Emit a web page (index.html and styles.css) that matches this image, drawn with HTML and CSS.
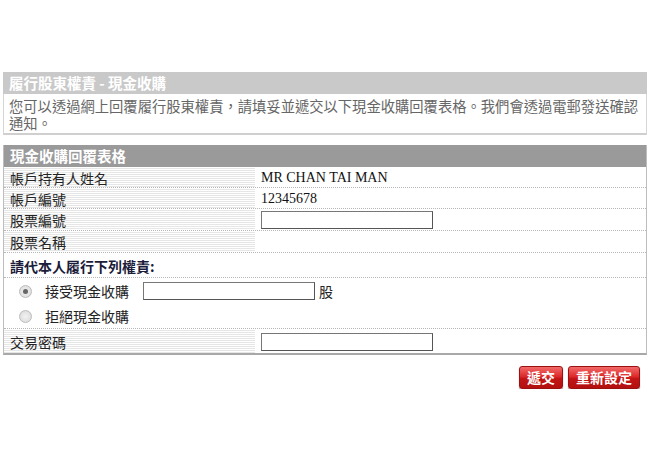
FILE: index.html
```html
<!DOCTYPE html>
<html lang="zh-Hant">
<head>
<meta charset="utf-8">
<link rel="stylesheet" href="styles.css">
</head>
<body>
<div class="page">
  <div class="sec">
    <div class="head head-light">履行股東權責 - 現金收購</div>
    <div class="desc">您可以透過網上回覆履行股東權責，請填妥並遞交以下現金收購回覆表格。我們會透過電郵發送確認通知。</div>
  </div>
  <div class="sec form">
    <div class="head head-dark">現金收購回覆表格</div>
    <div class="row"><div class="lbl">帳戶持有人姓名</div><div class="val serif">MR CHAN TAI MAN</div></div>
    <div class="row"><div class="lbl">帳戶編號</div><div class="val serif">12345678</div></div>
    <div class="row tall"><div class="lbl">股票編號</div><div class="val"><span class="input"></span></div></div>
    <div class="row tall"><div class="lbl">股票名稱</div><div class="val"></div></div>
    <div class="row full bold">請代本人履行下列權責:</div>
    <div class="opt"><span class="radio on"></span><span class="otext">接受現金收購</span><span class="input"></span><span class="unit">股</span></div>
    <div class="opt last"><span class="radio"></span><span class="otext">拒絕現金收購</span></div>
    <div class="row end"><div class="lbl">交易密碼</div><div class="val"><span class="input"></span></div></div>
  </div>
  <div class="btns">
    <span class="btn">遞交</span>
    <span class="btn">重新設定</span>
  </div>
</div>
</body>
</html>
```
FILE: styles.css
```css
html, body { margin: 0; padding: 0; background: #fff; }
body { font-family: "Noto Sans CJK TC", "Noto Sans", sans-serif; font-size: 13px; color: #222; }
.page { padding: 72px 3px 0 3px; width: 644px; }
.sec { display: flex; flex-direction: column; }
.head { height: 22px; line-height: 22px; color: #fff; font-weight: bold; padding-left: 6px; font-size: 14.5px; }
.head-light { background: #c9c9c9; }
.head-dark { background: #9a9a9a; }
.desc { border: 1px solid #d6d6d6; border-top: none; border-bottom: 2px solid #cfcfcf; color: #666; font-size: 14.3px; line-height: 17px; padding: 3px 0 2px 5px; height: 34px; }
.form { margin-top: 10px; border: 1px solid #bdbdbd; border-top: none; border-bottom: 2px solid #a8a8a8; }
.row { display: flex; height: 20px; border-bottom: 1px dotted #b8b8b8; }
.row.tall { height: 21px; }
.lbl { width: 245px; padding-left: 6px; padding-top: 2px; line-height: 18px; font-size: 14px; color: #222;
  background: repeating-linear-gradient(to bottom, #fff 0, #fff 1px, #e6e6e6 1px, #e6e6e6 2px); }
.row.tall .lbl { line-height: 19px; }
.val { padding-left: 6px; padding-top: 1px; display: flex; align-items: center; flex: 1; }
.serif { font-family: "Liberation Serif", "Times New Roman", serif; font-size: 14px; color: #111; }
.input { display: inline-block; width: 170px; height: 16px; border: 1px solid #777; border-right-color: #555; border-bottom-color: #555; background: #fff; }
.full { padding-left: 6px; padding-top: 2px; line-height: 22px; height: 22px; }
.bold { font-weight: bold; color: #1b1b3a; font-size: 14px; }
.opt { display: flex; align-items: center; height: 24px; padding-left: 15px; padding-top: 1px; font-size: 14px; }
.opt.last { border-bottom: 1px dotted #b8b8b8; }
.radio { width: 11px; height: 11px; border-radius: 50%; border: 1px solid #bbb; background: radial-gradient(circle, #f2f2f2, #d8d8d8); margin-right: 13px; position: relative; }
.radio.on::after { content: ""; position: absolute; left: 3px; top: 3px; width: 5px; height: 5px; border-radius: 50%; background: #666; }
.otext { width: 98px; }
.unit { margin-left: 4px; }
.row.end { border-bottom: none; height: 24px; }
.row.end .lbl { line-height: 22px; }
.btns { display: flex; justify-content: flex-end; gap: 5px; padding: 11px 7px 0 0; }
.btn { display: inline-block; height: 21px; line-height: 21px; padding: 0 7px; color: #fff; font-weight: bold; font-size: 14px; border-radius: 3px; border: 1px solid #9b1010;
  background: linear-gradient(to bottom, #f26a6a 0%, #dd2a2a 45%, #c21515 55%, #b31010 100%); box-shadow: 0 1px 1px #888; }
```
